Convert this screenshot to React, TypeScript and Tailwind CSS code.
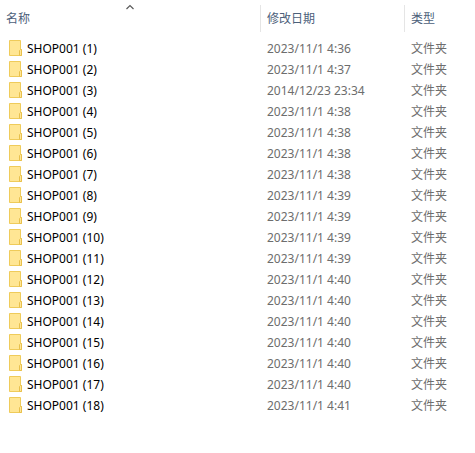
type Folder = {
  name: string;
  modified: string;
};

const folders: Folder[] = [
  { name: "SHOP001 (1)", modified: "2023/11/1 4:36" },
  { name: "SHOP001 (2)", modified: "2023/11/1 4:37" },
  { name: "SHOP001 (3)", modified: "2014/12/23 23:34" },
  { name: "SHOP001 (4)", modified: "2023/11/1 4:38" },
  { name: "SHOP001 (5)", modified: "2023/11/1 4:38" },
  { name: "SHOP001 (6)", modified: "2023/11/1 4:38" },
  { name: "SHOP001 (7)", modified: "2023/11/1 4:38" },
  { name: "SHOP001 (8)", modified: "2023/11/1 4:39" },
  { name: "SHOP001 (9)", modified: "2023/11/1 4:39" },
  { name: "SHOP001 (10)", modified: "2023/11/1 4:39" },
  { name: "SHOP001 (11)", modified: "2023/11/1 4:39" },
  { name: "SHOP001 (12)", modified: "2023/11/1 4:40" },
  { name: "SHOP001 (13)", modified: "2023/11/1 4:40" },
  { name: "SHOP001 (14)", modified: "2023/11/1 4:40" },
  { name: "SHOP001 (15)", modified: "2023/11/1 4:40" },
  { name: "SHOP001 (16)", modified: "2023/11/1 4:40" },
  { name: "SHOP001 (17)", modified: "2023/11/1 4:40" },
  { name: "SHOP001 (18)", modified: "2023/11/1 4:41" }
];

function FolderIcon() {
  return (
    <svg className="h-4 w-[13px] shrink-0" viewBox="0 0 13 16" aria-hidden="true">
      <path d="M.5.5h11v9h1v6H.5z" fill="#ffe694" stroke="#efcb5a" />
      <path d="M10.5 15.5v-5l1-1h1v6z" fill="#ffe699" stroke="#e8c04c" />
    </svg>
  );
}

function SortArrow() {
  return (
    <svg
      className="absolute top-1 left-1/2 h-[6px] w-[9px] -translate-x-1/2"
      viewBox="0 0 9 6"
      fill="none"
      aria-hidden="true"
    >
      <path d="M1 5l3.5-3.5L8 5" stroke="#5a5a5a" strokeWidth="1.2" />
    </svg>
  );
}

export default function App() {
  return (
    <main className="min-h-screen bg-white font-['Noto_Sans','Noto_Sans_CJK_SC',sans-serif] text-xs">
      <table className="w-full table-fixed border-collapse text-left whitespace-nowrap">
        <colgroup>
          <col className="w-[260px]" />
          <col className="w-36" />
          <col />
        </colgroup>
        <thead className="text-[#4c607a]">
          <tr>
            <th className="relative p-0 pt-[5px] pb-1.5 font-normal" aria-sort="ascending">
              <SortArrow />
              <button className="block h-[27px] w-full pl-1.5 text-left">名称</button>
            </th>
            <th className="p-0 pt-[5px] pb-1.5 font-normal">
              <button className="block h-[27px] w-full border-l border-[#e5e5e5] pl-1.5 text-left">修改日期</button>
            </th>
            <th className="p-0 pt-[5px] pb-1.5 font-normal">
              <button className="block h-[27px] w-full border-l border-[#e5e5e5] pl-1.5 text-left">类型</button>
            </th>
          </tr>
        </thead>
        <tbody className="leading-[17px] text-[#6d6d6d]">
          {folders.map((folder) => (
            <tr key={folder.name} className="h-[21px]">
              <td className="p-0 pl-[9px] text-black">
                <div className="flex items-start gap-[5px]">
                  <FolderIcon />
                  <span>{folder.name}</span>
                </div>
              </td>
              <td className="p-0 pl-[7px]">{folder.modified}</td>
              <td className="p-0 pl-[7px]">文件夹</td>
            </tr>
          ))}
        </tbody>
      </table>
    </main>
  );
}
